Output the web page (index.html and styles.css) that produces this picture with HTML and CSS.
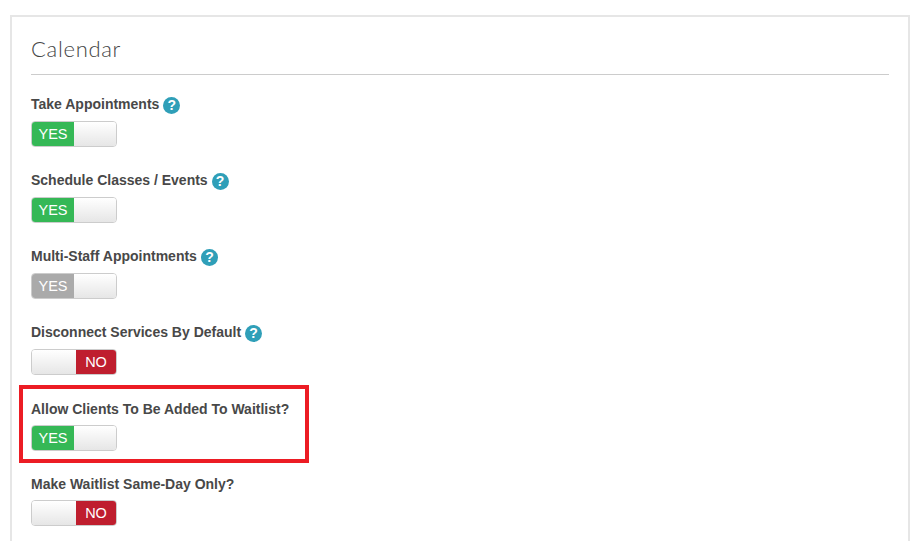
FILE: index.html
```html
<!DOCTYPE html>
<html lang="en">

<head>
    <meta charset="UTF-8">
    <title>Calendar Settings</title>
    <link rel="stylesheet" href="styles.css">
</head>

<body>
    <div class="panel">
        <h2>Calendar</h2>

        <div class="setting">
            <div class="setting-label">Take Appointments <span class="help">?</span></div>
            <div class="toggle"><span class="toggle-on">YES</span><span class="toggle-knob"></span></div>
        </div>

        <div class="setting">
            <div class="setting-label">Schedule Classes / Events <span class="help">?</span></div>
            <div class="toggle"><span class="toggle-on">YES</span><span class="toggle-knob"></span></div>
        </div>

        <div class="setting">
            <div class="setting-label">Multi-Staff Appointments <span class="help">?</span></div>
            <div class="toggle"><span class="toggle-on disabled">YES</span><span class="toggle-knob"></span></div>
        </div>

        <div class="setting">
            <div class="setting-label">Disconnect Services By Default <span class="help">?</span></div>
            <div class="toggle"><span class="toggle-knob"></span><span class="toggle-off">NO</span></div>
        </div>

        <div class="setting highlighted">
            <div class="setting-label no-help">Allow Clients To Be Added To Waitlist?</div>
            <div class="toggle"><span class="toggle-on">YES</span><span class="toggle-knob"></span></div>
        </div>

        <div class="setting">
            <div class="setting-label no-help">Make Waitlist Same-Day Only?</div>
            <div class="toggle"><span class="toggle-knob"></span><span class="toggle-off">NO</span></div>
        </div>
    </div>
</body>

</html>
```

FILE: styles.css
```css
html,
body {
    height: 100%;
    overflow: hidden;
}

body {
    font-family: "Liberation Sans", Arial, sans-serif;
    margin: 0;
    padding: 15px 8px 0 10px;
    background-color: #fff;
    color: #484848;
    box-sizing: border-box;
}

.panel {
    border: 2px solid #e6e6e6;
    border-bottom: none;
    padding: 17px 19px 0 19px;
    height: 100%;
    box-sizing: border-box;
}

.panel h2 {
    font-family: Lato, sans-serif;
    font-weight: 300;
    font-size: 22px;
    line-height: 30px;
    letter-spacing: 0.7px;
    color: #444;
    margin: 0 0 19px;
    padding-bottom: 10px;
    border-bottom: 1px solid #ccc;
}

.setting {
    position: relative;
    height: 76px;
}

.setting.highlighted {
    height: 75px;
}

.setting:last-child {
    height: auto;
}

/* Red box drawn round the setting being pointed out */
.highlighted::after {
    content: "";
    position: absolute;
    left: -12px;
    top: -13px;
    width: 282px;
    height: 70px;
    border: 4px solid #ec1c24;
}

.setting-label {
    display: flex;
    align-items: center;
    gap: 4px;
    font-size: 14px;
    font-weight: bold;
    line-height: 20px;
    height: 20px;
    margin-bottom: 7px;
}

/* labels without the help icon sit a pixel lower */
.setting-label.no-help {
    padding-top: 2px;
    box-sizing: border-box;
}

.help {
    display: inline-block;
    width: 17px;
    height: 17px;
    line-height: 17px;
    border-radius: 50%;
    background-color: #2f9fb8;
    color: #fff;
    font-size: 14px;
    text-align: center;
    margin-top: 2px;
}

.toggle {
    display: flex;
    width: 86px;
    height: 26px;
    box-sizing: border-box;
    border: 1px solid #ccc;
    border-radius: 4px;
    overflow: hidden;
}

.toggle-on,
.toggle-off {
    text-align: center;
    font-size: 14.5px;
    line-height: 24px;
    color: #fff;
}

.toggle-on {
    width: 42px;
    background-color: #35b856;
}

.toggle-on.disabled {
    background-color: #aaa;
}

.toggle-off {
    width: 40px;
    background-color: #bf1e2e;
}

.toggle-knob {
    flex: 1;
    background: linear-gradient(to bottom, #fff, #e6e6e6);
}
```
